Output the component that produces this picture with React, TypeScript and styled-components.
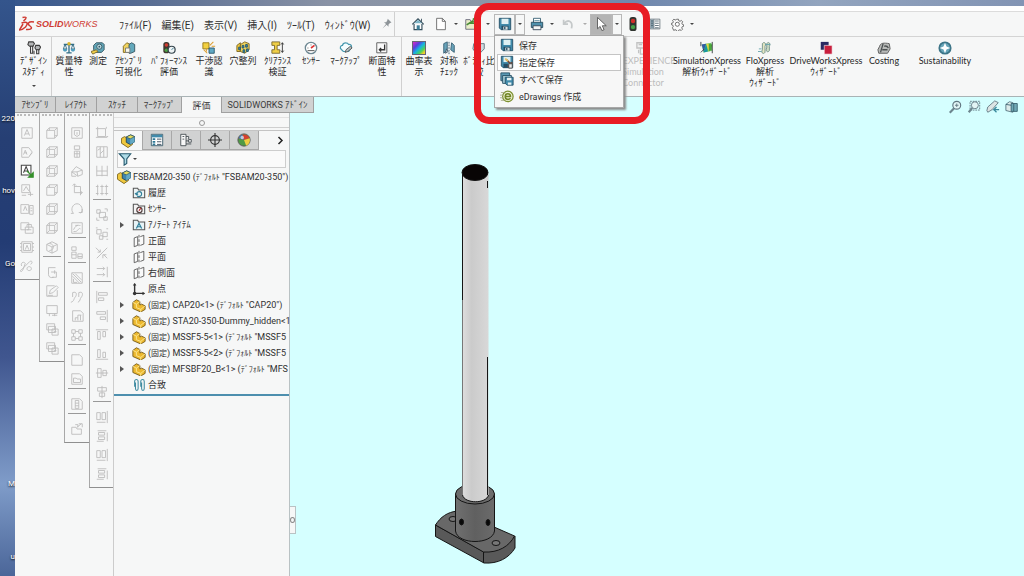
import React from "react";
import styled, { createGlobalStyle } from "styled-components";

const GlobalStyle = createGlobalStyle`
  * { box-sizing: border-box; }
  body { margin: 0; font-family: Roboto, "Noto Sans CJK JP", sans-serif; color: #303030; }
  button { font: inherit; color: inherit; background: none; border: 0; padding: 0; margin: 0; }
  svg { display: block; flex: none; }
  ul { list-style: none; margin: 0; padding: 0; }
`;

/* ---------- desktop and window frame ---------- */

const Desktop = styled.div`
  position: relative;
  display: grid;
  grid-template-columns: 15px minmax(0, 1fr);
  min-height: 100vh;
  padding-top: 6px;
  background: linear-gradient(90deg, #34558c 0, #5b6f94 15%, #8a93a6 32%, #8b98a8 50%, #6f87ad 62%, #93a5bf 80%, #8294b4 100%);
`;

const DesktopEdge = styled.div`
  display: grid;
  grid-template-rows: 119px 72px 73px 220px 73px 1fr;
  margin-top: -6px;
  padding-top: 6px;
  overflow: hidden;
  background: linear-gradient(180deg, #34558c 0, #263f74 24%, #233c74 42%, #40568f 62%, #7f9cc9 84%, #4b6699 100%);
`;

const DesktopLabel = styled.span`
  align-self: end;
  justify-self: end;
  line-height: 12px;
  font-size: 8px;
  white-space: nowrap;
  color: #fff;
  text-shadow: 0 1px 2px #000;
`;

const Window = styled.div`
  display: flex;
  flex-direction: column;
  min-width: 0;
  background: #f6f7f7;
`;

const TitleEdge = styled.div`
  height: 6px;
  background: #fff;
  border-bottom: 1px solid #dcdcdc;
`;

/* ---------- menu bar ---------- */

const MenuBar = styled.header`
  display: flex;
  align-items: stretch;
  height: 25px;
  border-bottom: 1px solid #d4d4d4;
  font-size: 10px;
`;

const Brand = styled.div`
  display: flex;
  align-items: center;
  gap: 1px;
  width: 97px;
  padding-left: 4px;
  font-family: "Liberation Sans", sans-serif;
  font-size: 9px;
  font-style: italic;
  color: #cf3b33;
`;

const Menus = styled.nav`
  display: flex;
  align-items: center;
  gap: 10px;
  padding-left: 7px;
  width: 283px;
  white-space: nowrap;
  border-right: 1px solid #d0d0d0;
`;

const QuickBar = styled.div`
  display: flex;
  align-items: center;
  padding-left: 12px;
`;

const QuickButton = styled.button<{ $w: number; $on?: boolean; $boxed?: boolean }>`
  display: flex;
  align-items: center;
  justify-content: center;
  width: ${(p) => p.$w}px;
  height: 21px;
  background: ${(p) => (p.$on ? "#b4b4b4" : "transparent")};
  border: ${(p) => (p.$boxed ? "1px solid #b8b8b8" : "0")};
`;

const Caret = styled.span<{ $pale?: boolean }>`
  border: 2px solid transparent;
  border-top-color: ${(p) => (p.$pale ? "#aaa" : "#444")};
  border-bottom: 0;
`;

const StudyCaret = styled(Caret)`
  margin-top: 8px;
`;

const SaveGroup = styled.div`
  position: relative;
  display: flex;
  z-index: 5;
`;

const SaveMenu = styled.ul`
  position: absolute;
  top: 21px;
  left: 0;
  width: 130px;
  padding: 1px 2px 2px;
  background: #f7f7f7;
  border: 1px solid #a8a8a8;
  box-shadow: 2px 2px 2px #8c8c8c;
`;

const SaveItem = styled.button<{ $hot?: boolean }>`
  display: flex;
  align-items: center;
  gap: 5px;
  width: 100%;
  height: 17px;
  padding-left: 2px;
  font-size: 9px;
  text-align: left;
  background: ${(p) => (p.$hot ? "#fff" : "transparent")};
  border: 1px solid ${(p) => (p.$hot ? "#c4c4c4" : "transparent")};
`;

const Highlight = styled.div`
  position: absolute;
  top: -11px;
  left: -20px;
  width: 176px;
  height: 121px;
  border: 7px solid #e81c24;
  border-radius: 15px;
  pointer-events: none;
`;

/* ---------- ribbon ---------- */

const Ribbon = styled.div`
  display: flex;
  height: 60px;
  border-bottom: 1px solid #a9b3b5;
`;

const RibbonGroup = styled.div<{ $line?: boolean }>`
  display: flex;
  padding: 4px 1px 0 2px;
  border-right: ${(p) => (p.$line ? "1px solid #d0d0d0" : "0")};
`;

const RibbonButton = styled.button<{ $w: number; $dim?: boolean }>`
  display: flex;
  flex-direction: column;
  align-items: center;
  width: ${(p) => p.$w}px;
  font-family: Lato, "Noto Sans CJK JP", sans-serif;
  font-size: 9px;
  line-height: 11px;
  white-space: pre;
  color: ${(p) => (p.$dim ? "#bdbdbd" : "#282828")};
  & > svg { opacity: ${(p) => (p.$dim ? 0.4 : 1)}; }
`;

const HiddenTools = styled.div`
  width: 119px;
`;

/* ---------- body ---------- */

const Body = styled.div`
  display: flex;
  flex: 1;
  min-height: 0;
`;

const LeftPane = styled.aside`
  position: relative;
  z-index: 1;
  display: flex;
  flex-direction: column;
  width: 275px;
  background: #f6f7f7;
  border-right: 1px solid #b9c2c4;
`;

const Tabs = styled.div`
  display: flex;
  height: 16px;
  width: max-content;
  font-size: 9px;
`;

const Tab = styled.button<{ $w: number; $active?: boolean }>`
  width: ${(p) => p.$w}px;
  color: #3c3c3c;
  white-space: nowrap;
  background: ${(p) => (p.$active ? "#f6f7f7" : "#d1d2d2")};
  border-right: 1px solid #a0a0a0;
  border-bottom: ${(p) => (p.$active ? "0" : "1px solid #a0a0a0")};
`;

const Workspace = styled.div`
  display: flex;
  flex: 1;
  align-items: flex-start;
`;

const ToolColumn = styled.div`
  display: flex;
  flex-direction: column;
  align-items: center;
  width: 25px;
  padding-bottom: 4px;
  border-right: 1px solid #a8a8a8;
  border-bottom: 1px solid #8f8f8f;
  margin-right: -1px;
  & + & { border-left: 1px solid #a8a8a8; width: 26px; }
  & + & + & + & { border-right: 0; width: 24px; }
`;

const Grip = styled.div`
  width: 20px;
  height: 9px;
  margin-top: 1px;
  border-top: 2px dotted #bbb;
`;

const ToolButton = styled.button`
  display: flex;
  align-items: center;
  justify-content: center;
  width: 20px;
  height: 19px;
`;

const ToolLine = styled.div`
  width: 18px;
  height: 6px;
  border-top: 1px solid #999;
`;

/* ---------- feature manager ---------- */

const Manager = styled.section`
  flex: 1;
  min-width: 0;
  align-self: stretch;
  margin-left: 1px;
  border-left: 1px solid #ccc;
`;

const Knob = styled.div`
  display: flex;
  justify-content: center;
  align-items: center;
  height: 11px;
  margin: 4px 0 2px;
  border-top: 1px solid #e2e2e2;
  border-bottom: 1px solid #cfcfcf;
  &::after { content: ""; width: 4px; height: 4px; border: 1px solid #999; border-radius: 50%; }
`;

const ManagerTabs = styled.div`
  display: flex;
  height: 20px;
  border-top: 1px solid #c4c4c4;
`;

const ManagerTab = styled.button<{ $active?: boolean }>`
  display: flex;
  align-items: center;
  justify-content: center;
  width: 29px;
  background: ${(p) => (p.$active ? "#f6f7f7" : "#d1d2d2")};
  border-right: 1px solid #a8a8a8;
  border-bottom: ${(p) => (p.$active ? "0" : "1px solid #a8a8a8")};
`;

const More = styled.button`
  flex: 1;
  display: flex;
  align-items: center;
  justify-content: flex-end;
  padding-right: 5px;
`;

const Filter = styled.label`
  display: flex;
  align-items: center;
  gap: 1px;
  height: 18px;
  margin: 0 3px;
  border: 1px solid #cdcdcd;
  background: #fafafa;
  input { flex: 1; min-width: 0; border: 0; outline: 0; background: none; font-size: 9px; }
`;

const Tree = styled.ul`
  border-bottom: 2px solid #4d8fae;
  padding: 1px 0;
`;

const TreeRow = styled.li<{ $root?: boolean }>`
  display: flex;
  align-items: center;
  gap: 2px;
  height: 16px;
  padding-left: ${(p) => (p.$root ? 3 : 5)}px;
  font-size: 9px;
  line-height: 16px;
  white-space: nowrap;
`;

const Small = styled.span`
  font-size: 8px;
`;

const Expander = styled.span<{ $shown?: boolean }>`
  flex: none;
  width: 11px;
  padding-left: 1px;
  &::before {
    content: "";
    display: block;
    width: 0;
    border: 3px solid transparent;
    border-left: 4px solid ${(p) => (p.$shown ? "#555" : "transparent")};
    border-right: 0;
  }
`;

/* ---------- graphics area ---------- */

const Viewport = styled.main`
  position: relative;
  flex: 1;
  min-width: 0;
  min-height: 479px;
  background: #d5ffff;
`;

const ViewTools = styled.div`
  display: flex;
  justify-content: flex-end;
  gap: 5px;
  padding: 3px 5px 0 0;
`;

const Model = styled.svg`
  position: absolute;
  left: 140px;
  top: 63px;
`;

const Splitter = styled.button`
  position: absolute;
  left: 0;
  top: 409px;
  display: flex;
  align-items: center;
  width: 6px;
  height: 28px;
  background: #f6f7f7;
  border: 1px solid #b9c2c4;
  border-left: 0;
  &::after { content: ""; width: 4px; height: 4px; border: 1px solid #888; border-radius: 50%; }
`;

/* ---------- icons ---------- */

type IconProps = { name: string; size?: number };

const shapes: Record<string, React.ReactNode> = {
  home: <><path d="M1.500 8.500 8 2l6.500 6.500M3.500 8v6.500h9V8" fill="#fff" stroke="#334d5b" strokeWidth="1.300" /><path d="M3.500 7 8 3l4.500 4" fill="#7fb5c7" /><path d="M6.500 14.500v-5h3.500v5z" fill="#3d7f99" /><path d="M12 2v3.500" stroke="#334d5b" /></>,
  page: <><path d="M3 1.500h6.500l3.500 3.500v9.500H3z" fill="#fff" stroke="#666" /><path d="M9.500 1.500v3.500H13" fill="none" stroke="#666" /></>,
  open: <><path d="M2 3h5l1 2h6v9H2z" fill="#e9edc9" stroke="#667" /><path d="M7 7h6M10 3l3-2 1 4M3 9l8-5" stroke="#498c37" strokeWidth="2" fill="none" /></>,
  save: <><path d="M1.500 1.500h13v13h-11l-2-2z" fill="#418bab" stroke="#244d63" /><path d="M4 2h8v6H4z" fill="#dff0f3" /><path d="M4 10h8v4.500H4z" fill="#254d64" /><path d="M6 11h5v3.500H6z" fill="#d6dedf" /><path d="M7 11.500h1.500V14H7z" fill="#254d64" /></>,
  saveAs: <><path d="M1.500 1.500h13v13h-11l-2-2z" fill="#418bab" stroke="#244d63" /><path d="M4 2h8v6H4z" fill="#dff0f3" /><path d="M4 10h5v4.500H4z" fill="#254d64" /><path d="m7 5 5 5M9 13.500l5-5" stroke="#754a3b" strokeWidth="2" /><path d="m6 4 3 3" stroke="#e9bd5d" strokeWidth="2" /><path d="M10 10h4v5h-4z" fill="#eee" stroke="#444" /></>,
  saveAll: <><path d="M1 1h10v9H1z" fill="#5b9ab5" stroke="#244d63" /><path d="M3 4h10v9H3z" fill="#a5cbd6" stroke="#244d63" /><path d="M6 6h9v9H8l-2-2z" fill="#418bab" stroke="#244d63" /><path d="M8 6.500h5v3H8zM9 12h4v2.500H9z" fill="#e7f1f2" /></>,
  edraw: <><circle cx="9" cy="8.500" r="6" fill="#eef2d2" stroke="#7b8f2e" strokeWidth="1.400" /><path d="M6 8.500h6c0-4-6-4-6 0s4 4 6 2" fill="none" stroke="#718526" strokeWidth="1.800" /><path d="M1 4h4M0 7h4M0 10h4M1 13h4" stroke="#a8ad8a" /></>,
  print: <><path d="M4 1.500h8V7H4z" fill="#fff" stroke="#345b70" /><path d="M1.500 6h13v6h-13z" fill="#4f91ad" stroke="#264b5e" /><path d="M3.500 10h9v4.500h-9z" fill="#f4f7f7" stroke="#345" /><path d="M5 4h6" stroke="#6797a9" /></>,
  undo: <path d="M3 3v5h5M3.500 7.500C8 2 14 5 12 13" fill="none" stroke="#c5c9ca" strokeWidth="2" />,
  cursor: <path d="M4 .5v13l3-2.700L9 15.500l2.500-1L9.500 10H14z" fill="#fff" stroke="#555" />,
  traffic: <><rect x="4" y="0" width="8" height="16" rx="3" fill="#303530" /><circle cx="8" cy="4.500" r="2.500" fill="#d22e29" /><circle cx="8" cy="11.500" r="2.500" fill="#45a247" /></>,
  list: <><path d="M1.500 1.500h13v13h-13z" fill="#fff" stroke="#56636b" /><path d="M2 2h4v12H2z" fill="#8099a6" /><path d="M8 4h5M8 7h5M8 10h5M8 13h5M6.500 2v12M3 4h2M3 7h2M3 10h2" stroke="#39505c" /></>,
  gear: <><path d="m6.800 1.500 2.400 0 .4 2 1.500.6 1.700-1.100 1.600 1.700-1.100 1.600.6 1.500 1.600.5v1.900l-1.700.5-.6 1.500 1 1.600-1.600 1.600-1.600-1-1.500.6-.5 1.500H7l-.5-1.600-1.500-.6-1.600 1.100L1.800 12l1-1.700-.6-1.500-1.500-.5V6.400l1.600-.3.6-1.500-1-1.600 1.700-1.500 1.500 1 1.400-.5z" fill="#fafafa" stroke="#555" /><circle cx="7.800" cy="7.700" r="2.500" fill="#fff" stroke="#555" /></>,
  pin: <path d="m9 1 5 5-2 .6-2 2v3L7.500 9 2 14l4.700-6L4 5.500h3L8.500 3z" fill="#8d9498" />,
  study: <><path d="M2 1h5l1.500 2L7 6H3L1 4z" fill="#b4b6b7" stroke="#3c3c3c" strokeWidth="1.200" /><path d="M4 6h2.500v8H4z" fill="#eee" stroke="#3c3c3c" strokeWidth="1.200" /><path d="M10 5h4l1.500 2L14 10h-3.500L9 8z" fill="#b4b6b7" stroke="#3c3c3c" strokeWidth="1.200" /><path d="M11 10h2.500v4.500H11zM8 11v4" fill="#eee" stroke="#3c3c3c" strokeWidth="1.200" /></>,
  scale: <><path d="M8 2v11M2 4h12M5 13.500h6" stroke="#316d86" strokeWidth="1.500" /><path d="m3.500 4-2 5h4zM12.500 4l-2 5h4z" fill="none" stroke="#316d86" /><path d="M1 9h5c0 4-5 4-5 0M10 9h5c0 4-5 4-5 0" fill="#4f9dbd" /><circle cx="8" cy="3" r="2" fill="#deb72e" /></>,
  measure: <><path d="M3 10V5l3-3h7l2 2v6l-3 3H5z" fill="#61a6b9" stroke="#34525e" /><circle cx="9.500" cy="6.500" r="3" fill="#b9dbe2" stroke="#34525e" /><circle cx="9.500" cy="6.500" r="1" fill="#34525e" /><path d="m0 12 6-2 2 2-6 3z" fill="#f0cf4a" stroke="#77652b" /></>,
  asm: <><path d="m.5 5 3.500-2 3 1.500V9l2 1.500 4-2V12l-5 3.500-7.500-5z" fill="#f0c83d" stroke="#796119" /><path d="m6 3.500 5-2.500 4.500 2v6l-5 3L6 9.500z" fill="#3f86ad" stroke="#22485c" /><path d="m6 3.500 4.500 2v6.500l5-3V3z" fill="#63a9c4" /><path d="m6 3.500 5-2.500 4.500 2-5 2.500z" fill="#e4dc5c" stroke="#22485c" strokeWidth=".7" /></>,
  boxes: <><path d="m1.500 6 4-4 4 2v9h-8z" fill="#f2d560" stroke="#796119" /><path d="m8 4 3-2 3.500 2v8L10 14H8z" fill="#63a9bc" stroke="#34525e" /><path d="M4 8h5v5H4z" fill="#f7f7e9" stroke="#777" /></>,
  pattern: <><path d="m1 5 4-3v10H1z" fill="#f0c83d" stroke="#796119" /><path d="m5 4 5-3 5 2v7l-5 4-5-2z" fill="#efd35b" stroke="#796119" /><path d="M7 5h2v3H7zM11 4h2v3h-2zM3 7h2v3H3zM8 10h2v3H8zM12 9h2v3h-2z" fill="#3f89a8" stroke="#24566c" /></>,
  perf: <><rect x="1.500" y="1" width="7" height="13" rx="3" fill="#403830" /><circle cx="5" cy="4.500" r="2" fill="#d13b30" /><circle cx="5" cy="10.500" r="2" fill="#4ba244" /><circle cx="11" cy="10" r="4" fill="#eff4f5" stroke="#34444c" strokeWidth="1.400" /><path d="m11 10 2-2" stroke="#1d6781" /></>,
  clash: <><path d="M1 2h7v7H1z" fill="#f2d040" stroke="#927616" /><path d="M8 8h6v6H8z" fill="#60a9c5" stroke="#28566c" /><path d="m9 5 4-4M11 6h4M2 10l4 4M5 9v3" stroke="#dd9e2e" strokeWidth="1.200" /></>,
  clear: <><path d="M1 1h9v4H7v5h3v4H1v-4h3V5H1z" fill="#f0cf46" stroke="#77652b" /><path d="M13 2v11M11.500 4 13 2l1.500 2M11.500 11l1.500 2 1.500-2" fill="none" stroke="#333" /></>,
  gauge: <><circle cx="8" cy="8" r="6.500" fill="#fff" stroke="#6d8792" strokeWidth="1.500" /><path d="m8 8 4-3" stroke="#d33" strokeWidth="1.800" /><path d="M4 8h1M8 4v1M4 11h8" stroke="#444" /></>,
  cloud: <><path d="M3 10C0 8 2 5 4 5c1-4 6-3 7-1 4-1 4 4 2 5l-2 3H5z" fill="#f6fdff" stroke="#4698ae" strokeWidth="1.400" /><path d="m7 13 1-3 5-4 2 2-5 4z" fill="#b6c0c2" stroke="#555" /></>,
  section: <><path d="M2 2h11.500v11.500H2z" fill="#fafafa" stroke="#555" /><path d="M11 4v6H5m2-2-2 2 2 2" fill="none" stroke="#333" strokeWidth="1.500" /></>,
  symmetry: <><path d="m2 3 4-2v9l-4 4zM11 2l3 3v8l-4-3z" fill="#69a4bb" stroke="#345b70" /><path d="M8 1v14" stroke="#345b70" strokeDasharray="2 1" /><path d="m5 9 2 3-3 2z" fill="#bdd7df" stroke="#456" /></>,
  compare: <path d="M2 3h5v7l3 3 4-4V3H9v5L4 13 1 9z" fill="#d0dade" stroke="#59717b" />,
  dx: <><path d="M1 2h9v6H1zM5 8h10v7H5z" fill="#eee" stroke="#777" strokeWidth="1.500" /><path d="M3 4h4M8 11h4M12 2v5M3 10v4" stroke="#777" strokeWidth="1.500" /></>,
  sim: <><path d="m2 4 11-2 1 9-10 2z" fill="#6fc96c" /><path d="m2 4 5-1-3 9z" fill="#3258a7" /><path d="m7 3 2 9-5 1z" fill="#1795a2" /><path d="m7 3 4 0-1 9z" fill="#e5d944" /><path d="m10 3 4 1-1 6-3 2z" fill="#4aa93c" /><path d="M1 1v5M1 13l4-4M14 1v13" stroke="#303638" /></>,
  flo: <><path d="M5 3c2-3 5 0 3 3v7c-2 3-5 0-3-3z" fill="#e4e7c3" stroke="#6f8e86" /><path d="M10 3c2-3 5 0 3 3v5c-2 3-5 0-3-3z" fill="#cddcc4" stroke="#6f8e86" /><path d="M0 12h4M1 9h3M8 4h6" stroke="#63a3ab" /></>,
  drive: <><path d="M2 1h9v9H2z" fill="#292962" /><path d="M6 5h9v10H6z" fill="#c81f3d" stroke="#f6f7f7" strokeWidth=".7" /></>,
  cost: <><path d="M3 6c1-4 5-4 11-3l1 6-3 5H2l-1-4z" fill="#b9bbb9" stroke="#555" /><path d="M8 6c3-1 4 0 5 2M6 10h6M7 3 4 13" fill="none" stroke="#4d5253" strokeWidth="1.500" /></>,
  sustain: <><circle cx="8" cy="8" r="6.500" fill="#67a5b8" stroke="#3c7487" strokeWidth="2" /><path d="m8 2 1.700 4.300L14 8l-4.300 1.700L8 14 6.300 9.700 2 8l4.300-1.700z" fill="#fff" /></>,
  part: <><path d="m1 5 4-3 4 2v4l2-1 4 2v4l-5 3-9-4z" fill="#edb92f" stroke="#735817" /><path d="m1 5 4 2 4-3M5 7v4l5 2 5-4M10 13v3" fill="none" stroke="#fbe896" /></>,
  props: <><path d="M1.500 1.500h13v13h-13z" fill="#fff" stroke="#355766" /><path d="M2 2h12v3H2z" fill="#418bab" /><path d="M3 7h3M3 10h3M3 13h3" stroke="#2e7896" strokeWidth="2" /><path d="M8 7h5M8 10h5M8 13h5" stroke="#345" /></>,
  config: <><path d="M2 1.500h6v13H2zM4 4h2M4 7h2M8 4h3v3M11 7.500h3v3h-3zM8 9h3M8 12.500h6" fill="#f8f8f8" stroke="#454d51" /></>,
  target: <><circle cx="8" cy="8" r="5" fill="none" stroke="#333" strokeWidth="1.300" /><path d="M8 0v16M0 8h16" stroke="#333" strokeWidth="1.300" /></>,
  ball: <><circle cx="8" cy="8" r="7" fill="#4f9a44" stroke="#555" /><path d="M8 8 1.500 6A7 7 0 0 1 14.500 6z" fill="#d5402f" /><path d="M1.500 6A7 7 0 0 1 6 1.500L8 8z" fill="#437dad" /><path d="M8 8 14.500 6c1 4-1 7-4 8.500z" fill="#efce43" /><circle cx="6" cy="5" r="2" fill="#eee" opacity=".7" /></>,
  funnel: <path d="M1.500 2h13L10 8v5l-3 2V8z" fill="#aedbe7" stroke="#285b70" strokeWidth="1.300" />,
  history: <><path d="M1.500 2.500h5l1 2h7v9h-13z" fill="#edf4f5" stroke="#555" strokeWidth="1.200" /><path d="M5 9c1-4 6-3 6 0s-4 4-5 2M3.500 8 5 10l2-1" fill="none" stroke="#2f7f99" strokeWidth="1.300" /></>,
  sensor: <><path d="M1.500 2.500h5l1 2h7v9h-13z" fill="#f3f3f3" stroke="#555" strokeWidth="1.200" /><circle cx="8.500" cy="9" r="3" fill="#fff" stroke="#503d3d" strokeWidth="1.300" /><path d="m8 10 2-3" stroke="#b33" strokeWidth="1.500" /></>,
  note: <><path d="M1.500 2.500h5l1 2h7v9h-13z" fill="#e7f3f6" stroke="#555" strokeWidth="1.200" /><path d="m5 12 3-6 3 6M6 10h4" fill="none" stroke="#2f7f99" strokeWidth="1.400" /></>,
  plane: <><path d="m2.500 4.500 4-1.500v10l-4 1.500zM9.500 3l4-1.500v10L9.500 13" fill="#fafafa" stroke="#555" /><path d="M8 1v14" stroke="#555" strokeDasharray="3 2" /></>,
  origin: <><path d="M3 2v11h11" fill="none" stroke="#333" strokeWidth="1.600" /><path d="m1 4 2-3 2 3M12 11l3 2-3 2" fill="#333" /><circle cx="3" cy="13" r="2" fill="#333" /></>,
  mates: <path d="M3 10V4c0-3 4-3 4 0v8c0 3-3 3-3 0V5M10 10V4c0-3 4-3 4 0v8c0 3-3 3-3 0V5" fill="none" stroke="#3e8ba1" strokeWidth="1.200" />,
  zoomFit: <><circle cx="10" cy="6" r="4.500" fill="#e2f5f5" stroke="#607680" strokeWidth="1.300" /><path d="M7 9.500 2 14.500" stroke="#6d858e" strokeWidth="2.500" /><path d="M8 6h4M10 4v4" stroke="#607680" /></>,
  zoomArea: <><path d="M3.500 1.500h11v10h-11z" fill="none" stroke="#607680" strokeDasharray="2 1" /><circle cx="9" cy="6" r="4" fill="#e2f5f5" stroke="#607680" /><path d="m6 9-4 5" stroke="#6d858e" strokeWidth="2.500" /></>,
  prev: <><path d="m1 12 1-4 8-7 4 2-7 8-5 3z" fill="#dbe4e4" stroke="#607680" /><path d="M15 11H9l3-3m-3 3 3 3" fill="none" stroke="#38899c" strokeWidth="1.500" /></>,
  sectionView: <><path d="m1 5 4-3 4 1v11l-8-2z" fill="#dcebea" stroke="#54717d" /><path d="M7 4h7v9H7z" fill="#6fa9b5" stroke="#38616e" /><path d="M10 4v9M1 5l6 1" stroke="#38616e" /></>,
};

const Icon = ({ name, size = 14 }: IconProps) => (
  <svg width={size} height={size} viewBox="0 0 16 16" aria-hidden="true">{shapes[name]}</svg>
);

/* Outline glyphs of the disabled side tools, all in one pale grey. */
const outlines: Record<string, string> = {
  textBox: "M2 2h12v12H2zM5 11l3-7 3 7M6 9h4",
  textTag: "M2 3h8l4 5-4 6H2zM4 11l2-5 2 5M5 9h3M11 12l3-3",
  textPlus: "M2 2h9v9H2zM4 9l3-5 3 5M9 13h6M12 10v5M2 14h5",
  textCopy: "M1 3h9v10H1zM4 10l2-5 2 5M11 4h4v10h-4zM12 7h2M12 10h2",
  textLock: "M1 2h9v8H1zM6 7h9v7H6zM8 7V4h5v3M8 10h5",
  textGrid: "M2 2h12v12H2zM4 4h8v8H4zM6 11l2-5 2 5M0 4h2M0 8h2M0 12h2M14 4h2M14 8h2M14 12h2",
  link: "M2 8c-2-3 2-6 4-3l-3 8c-2 3-4 0-1-1l9-9c3-2 4 2 1 3M8 11c0-3 5-3 5 0s-5 3-5 0",
  cube: "M2 5h9v9H2zM5 2h9v9h-3M2 5l3-3M11 5l3-3M11 14l3-3M5 2v3",
  cubeWire: "M2 5h9v9H2zM5 2h9v9H5zM2 5l3-3M11 5l3-3M11 14l3-3M2 14l3-3",
  cubeRound: "M2 5l6-3 6 3v7l-6 3-6-3zM2 5l6 3 6-3M8 8v7M5 4c6 0 6 8 0 8",
  arc: "M12 3H4v8c0 3 3 4 6 3M7 8h6v6H8M11 6v4",
  edit: "M14 7v7H2V2h9M5 11l1-4 7-5 2 2-6 6zM3 13h6",
  screen: "M2 3h12v9H2zM5 12v3M11 12v3M8 14h6",
  layers: "M2 2h9v7H2zM4 5h8v7H4zM8 8h7v7H8zM10 11h3",
  shield: "M2 2h12v12H2zM5 5h6v5l-3 2-3-2zM8 7v3",
  split: "M5 1h6v4H5zM5 7h6v7H5zM5 10h6M8 7v7",
  poly: "M2 9l5-6 7 4v5l-5 2zM2 9l6 0 1 5M8 9l6-2M2 9v5h5",
  flip: "M5 1v10h9M5 4h7v10M3 3l2-2 2 2M12 9l2 2-2 2",
  loop: "M4 13C0 9 3 2 8 2s8 7 4 11M10 12h4V8M4 13H1",
  swirl: "M2 2h12v12H2zM4 10c4-8 7-4 8-5M4 12c6 1 5-5 8-3M6 5h3",
  parts: "M2 1h5v4H2zM2 7h5v7H2zM9 9h5v5H9zM2 10h5M9 12h5",
  tri: "M2 2h12v12H2zM3 3l10 10M3 6l8 8M6 3l7 7M4 9v4h4",
  twin: "M3 3c5-2 5 3 3 5s-1 5-5 6M10 3c5-2 5 3 3 5s-1 5-4 6M3 3v5M10 3v5",
  sheet: "M3 2h9l3 3v9H3zM6 13v-3h3V7h4M9 10v3M12 7v6",
  link4: "M2 2h4v4H2zM10 2h4v4h-4zM2 10h4v4H2zM10 10h4v4h-4zM6 4h4M6 12h4M4 6v4M12 6v4",
  blank: "M2 2h9l3 3v9H2z",
  folderPage: "M2 2h9l3 3v9H2zM4 7h3l1 1h4v4H4z",
  zip: "M2 2h9l3 3v9H2zM6 4h4v9H6zM6 7h4M6 10h4",
  exportBox: "M2 6h5l1 2h5v6H2zM8 6l5-4M10 2h4v4M6 3h3v3",
  frame: "M3 3h9v9H3zM1 3h2M3 1v2M13 1v2M13 12h2M1 13h13",
  cols: "M2 2h12v12H2zM6 2v12M10 2v12M3 6l3-2M6 10l4-4",
  rows: "M2 2v12M8 2v12M14 2v12M2 8h12M2 13h12",
  bars: "M3 2v12M8 2v12M13 2v12M1 4h3M6 4h4M11 4h4M1 12h3M6 12h4M11 12h4",
  overlap: "M2 2h4v4H2zM10 10h4v4h-4zM5 5h7v6H5zM11 1h3v3M2 11v3h3",
  group: "M2 3h5v5H2zM9 6h5v5H9zM5 10h4v4H5zM1 1h2M13 2h2M13 14h2",
  converge: "M1 2l5 5M6 4v3H3M14 2l-12 12M14 14l-4-4M9 14v-4h4",
  arrows: "M2 4h9M9 2l2 2-2 2M2 11h9M9 9l2 2-2 2M14 2v12",
  alignL: "M2 1v14M4 3h10v3H4zM4 9h6v3H4z",
  alignR: "M14 1v14M2 3h10v3H2zM6 9h6v3H6z",
  alignT: "M1 2h14M3 4h3v9H3zM9 4h3v6H9z",
  alignB: "M1 14h14M3 3h3v9H3zM9 6h3v6H9z",
  centerV: "M1 8h14M3 3h4v10H3zM9 5h4v6H9z",
  centerH: "M8 1v14M3 3h10v4H3zM5 9h6v4H5z",
  gapH: "M2 3h4v8H2zM8 3h4v8H8zM14 1v14M2 14h10",
  gapV: "M3 2h10M4 4h7v3H4zM4 9h7v3H4zM14 4v10M2 14h8",
};

const columns: string[][] = [
  ["textBox", "textTag", "insertText", "textPlus", "textCopy", "textLock", "textGrid", "link"],
  ["cube", "cubeWire", "cubeWire", "cube", "cubeWire", "cubeWire", "cubeRound", "-", "arc", "edit", "screen", "layers", "layers"],
  ["shield", "split", "poly", "flip", "loop", "swirl", "-", "parts", "-", "tri", "twin", "sheet", "link4", "-", "blank", "folderPage", "-", "zip", "-", "exportBox"],
  ["frame", "cols", "rows", "bars", "-", "overlap", "group", "converge", "arrows", "-", "alignL", "alignR", "alignT", "alignB", "centerV", "centerH", "-", "gapH", "gapV", "gapH", "gapV"],
];

const SideTool = ({ name }: { name: string }) => (
  <ToolButton aria-label={name} disabled={name !== "insertText"}>
    <svg width="14" height="14" viewBox="0 0 16 16" aria-hidden="true" fill="none">
      {name === "insertText" ? (
        <>
          <path d="M1.500 1.500h11v11h-11zM4 10l3-7 3 7M5 8h4" fill="#fff" stroke="#444" strokeWidth="1.200" />
          <path d="m8 8 7 7M15 10v5h-5z" fill="#35902b" stroke="#35902b" strokeWidth="1.500" />
        </>
      ) : (
        <path d={outlines[name]} stroke="#bbb" />
      )}
    </svg>
  </ToolButton>
);

/* ---------- data ---------- */

const menus = ["ﾌｧｲﾙ(F)", "編集(E)", "表示(V)", "挿入(I)", "ﾂｰﾙ(T)", "ｳｨﾝﾄﾞｳ(W)"];

type Tool = [label: string, icon: string, width: number];

const evaluateTools: Tool[] = [
  ["質量特\n性", "scale", 30],
  ["測定", "measure", 28],
  ["ｱｾﾝﾌﾞﾘ\n可視化", "boxes", 33],
  ["ﾊﾟﾌｫｰﾏﾝｽ\n評価", "perf", 48],
  ["干渉認\n識", "clash", 32],
  ["穴整列", "pattern", 36],
  ["ｸﾘｱﾗﾝｽ\n検証", "clear", 33],
  ["ｾﾝｻｰ", "gauge", 34],
  ["ﾏｰｸｱｯﾌﾟ", "cloud", 36],
  ["断面特\n性", "section", 36],
];

const checkTools: Tool[] = [
  ["曲率表\n示", "curvature", 30],
  ["対称\nﾁｪｯｸ", "symmetry", 30],
  ["ﾎﾞﾃﾞｨ比\n較", "compare", 30],
];

const xpressTools: Tool[] = [
  ["SimulationXpress\n解析ｳｨｻﾞｰﾄﾞ", "sim", 68],
  ["FloXpress\n解析\nｳｨｻﾞｰﾄﾞ", "flo", 48],
  ["DriveWorksXpress\nｳｨｻﾞｰﾄﾞ", "drive", 74],
  ["Costing", "cost", 42],
  ["Sustainability", "sustain", 80],
];

const tabs: [string, number][] = [
  ["ｱｾﾝﾌﾞﾘ", 41], ["ﾚｲｱｳﾄ", 41], ["ｽｹｯﾁ", 41], ["ﾏｰｸｱｯﾌﾟ", 44], ["評価", 40], ["SOLIDWORKS ｱﾄﾞｲﾝ", 92],
];

const treeItems: { icon: string; text: string; open?: boolean }[] = [
  { icon: "history", text: "履歴" },
  { icon: "sensor", text: "ｾﾝｻｰ" },
  { icon: "note", text: "ｱﾉﾃｰﾄ ｱｲﾃﾑ", open: true },
  { icon: "plane", text: "正面" },
  { icon: "plane", text: "平面" },
  { icon: "plane", text: "右側面" },
  { icon: "origin", text: "原点" },
  { icon: "part", text: '(固定) CAP20<1> (ﾃﾞﾌｫﾙﾄ "CAP20")', open: true },
  { icon: "part", text: "(固定) STA20-350-Dummy_hidden<1", open: true },
  { icon: "part", text: '(固定) MSSF5-5<1> (ﾃﾞﾌｫﾙﾄ "MSSF5', open: true },
  { icon: "part", text: '(固定) MSSF5-5<2> (ﾃﾞﾌｫﾙﾄ "MSSF5', open: true },
  { icon: "part", text: '(固定) MFSBF20_B<1> (ﾃﾞﾌｫﾙﾄ "MFS', open: true },
  { icon: "mates", text: "合致" },
];

/* Component names mix scripts: their Japanese words are set one size smaller. */
const ComponentName = ({ text }: { text: string }) => (
  <span>
    {text.split(/(固定|ﾃﾞﾌｫﾙﾄ)/).map((part, i) => (i % 2 ? <Small key={i}>{part}</Small> : part))}
  </span>
);

const Curvature = styled.span`
  width: 14px;
  height: 14px;
  border: 1px solid #667;
  background: linear-gradient(135deg, #e227c3 0, #5540e0 30%, #16b5df 52%, #4cd45a 74%, #f0cf2c 90%);
`;

const RibbonTool = ({ tool, dim }: { tool: Tool; dim?: boolean }) => (
  <RibbonButton $w={tool[2]} $dim={dim}>
    {tool[1] === "curvature" ? <Curvature /> : <Icon name={tool[1]} />}
    {tool[0]}
  </RibbonButton>
);

const saveItems: [string, string][] = [
  ["保存", "save"], ["指定保存", "saveAs"], ["すべて保存", "saveAll"], ["eDrawings 作成", "edraw"],
];

/* ---------- 3D part ---------- */

const PostModel = () => (
  <Model width="90" height="410" viewBox="430 160 90 410" role="img" aria-label="FSBAM20-350">
    <defs>
      <linearGradient id="pipe"><stop offset="0" stopColor="#dedede" /><stop offset=".35" stopColor="#cbcbcb" /><stop offset="1" stopColor="#d8d8d8" /></linearGradient>
      <linearGradient id="socket"><stop offset="0" stopColor="#707070" /><stop offset=".5" stopColor="#606060" /><stop offset="1" stopColor="#6b6b6b" /></linearGradient>
    </defs>
    <g stroke="#151515" strokeWidth="1" strokeLinejoin="round">
      <path d="M435.500 525v11.500L484 563c14 1 25-5 31-15v-12l-31 16z" fill="#595959" />
      <path d="M435.500 525c5-8 12-13 22-14l57 25c-5 10-16 17-31 16z" fill="#686868" />
      <path d="M483.500 552v11" fill="none" />
      <ellipse cx="453" cy="519" rx="4" ry="2.500" fill="#777" />
      <ellipse cx="496" cy="543" rx="4" ry="2.500" fill="#777" />
      <path d="M455.500 494v37c2 14 37 14 39 0v-37z" fill="url(#socket)" />
      <ellipse cx="475" cy="494" rx="19.500" ry="10" fill="#6c6c6c" />
      <path d="M462.500 172v323c2 9 24 9 26 0V172z" fill="url(#pipe)" stroke="none" />
      <path d="M462.500 495c2 9 24 9 26 0" fill="none" />
      <path d="M462.500 174v126M487.500 181v7M487.500 357v138" fill="none" />
      <path d="M462.500 300v195" fill="none" stroke="#777" />
      <ellipse cx="475" cy="172.500" rx="13" ry="8" fill="#080505" />
      <ellipse cx="461.500" cy="522" rx="2" ry="3" fill="#080808" />
      <ellipse cx="488" cy="522.500" rx="2" ry="3" fill="#080808" />
    </g>
  </Model>
);

export default function App() {
  return (
    <>
      <GlobalStyle />
      <Desktop>
        <DesktopEdge>
          {["220", "hov", "Go", "M", "u"].map((t) => <DesktopLabel key={t}>{t}</DesktopLabel>)}
        </DesktopEdge>
        <Window>
          <TitleEdge />
          <MenuBar>
            <Brand>
              <svg width="16" height="17" viewBox="0 0 16 17" fill="none" stroke="#cf3b33" strokeWidth="1.500" aria-hidden="true">
                <path d="M3.500 1.500c4-1 5 0 1 3.500M2.500 7c6-2 7 0 4 4-2 2-4 3-6 3l3.500-6M15 6c-6-1-7 2-4 4s1 4-4 3.500" />
              </svg>
              <span><b>SOLID</b>WORKS</span>
            </Brand>
            <Menus>
              {menus.map((m) => <button key={m}>{m}</button>)}
              <button aria-label="ピン"><Icon name="pin" size={12} /></button>
            </Menus>
            <QuickBar>
              <QuickButton $w={22} aria-label="ホーム"><Icon name="home" /></QuickButton>
              <QuickButton $w={23} aria-label="新規"><Icon name="page" /></QuickButton>
              <QuickButton $w={8} aria-label="新規の種類"><Caret /></QuickButton>
              <QuickButton $w={22} aria-label="開く"><Icon name="open" /></QuickButton>
              <QuickButton $w={12} aria-label="最近のファイル"><Caret /></QuickButton>
              <SaveGroup>
                <QuickButton $w={21} $boxed aria-label="保存ボタン"><Icon name="save" /></QuickButton>
                <QuickButton $w={10} $boxed aria-label="保存メニュー"><Caret /></QuickButton>
                <SaveMenu>
                  {saveItems.map(([text, icon], i) => (
                    <li key={text}><SaveItem $hot={i === 1}><Icon name={icon} />{text}</SaveItem></li>
                  ))}
                </SaveMenu>
                <Highlight />
              </SaveGroup>
              <QuickButton $w={23} aria-label="印刷"><Icon name="print" /></QuickButton>
              <QuickButton $w={8} aria-label="印刷の種類"><Caret /></QuickButton>
              <QuickButton $w={24} aria-label="元に戻す"><Icon name="undo" /></QuickButton>
              <QuickButton $w={10} aria-label="元に戻す一覧"><Caret $pale /></QuickButton>
              <QuickButton $w={22} $on $boxed aria-label="選択"><Icon name="cursor" /></QuickButton>
              <QuickButton $w={10} $boxed aria-label="選択の種類"><Caret /></QuickButton>
              <QuickButton $w={21} aria-label="再構築"><Icon name="traffic" /></QuickButton>
              <QuickButton $w={24} aria-label="ファイル プロパティ"><Icon name="list" size={12} /></QuickButton>
              <QuickButton $w={20} aria-label="オプション"><Icon name="gear" size={13} /></QuickButton>
              <QuickButton $w={10} aria-label="オプション一覧"><Caret /></QuickButton>
            </QuickBar>
          </MenuBar>
          <Ribbon>
            <RibbonGroup $line>
              <RibbonButton $w={33}>
                <Icon name="study" />{"ﾃﾞｻﾞｲﾝ\nｽﾀﾃﾞｨ"}
                <StudyCaret />
              </RibbonButton>
            </RibbonGroup>
            <RibbonGroup $line>
              {evaluateTools.map((t) => <RibbonTool key={t[0]} tool={t} />)}
            </RibbonGroup>
            <RibbonGroup>
              {checkTools.map((t) => <RibbonTool key={t[0]} tool={t} />)}
              <HiddenTools />
              <RibbonTool tool={["3DEXPERIENCE\nSimulation\nConnector", "dx", 60]} dim />
              {xpressTools.map((t) => <RibbonTool key={t[0]} tool={t} />)}
            </RibbonGroup>
          </Ribbon>
          <Body>
            <LeftPane>
              <Tabs>
                {tabs.map(([t, w]) => <Tab key={t} $w={w} $active={t === "評価"}>{t}</Tab>)}
              </Tabs>
              <Workspace>
                {columns.map((col, c) => (
                  <ToolColumn key={c}>
                    <Grip />
                    {col.map((n, i) => (n === "-" ? <ToolLine key={i} /> : <SideTool key={i} name={n} />))}
                  </ToolColumn>
                ))}
                <Manager>
                  <Knob />
                  <ManagerTabs>
                    {["asm", "props", "config", "target", "ball"].map((n, i) => (
                      <ManagerTab key={n} $active={i === 0} aria-label={n}><Icon name={n} /></ManagerTab>
                    ))}
                    <More aria-label="さらに表示">
                      <svg width="7" height="9" viewBox="0 0 7 9" fill="none" stroke="#222" strokeWidth="1.500"><path d="m1.500 1 3.500 3.500L1.500 8" /></svg>
                    </More>
                  </ManagerTabs>
                  <Filter>
                    <Icon name="funnel" /><Caret /><input aria-label="フィルター" />
                  </Filter>
                  <Tree>
                    <TreeRow $root>
                      <Icon name="asm" />
                      <ComponentName text={'FSBAM20-350 (ﾃﾞﾌｫﾙﾄ "FSBAM20-350")'} />
                    </TreeRow>
                    {treeItems.map((r) => (
                      <TreeRow key={r.text}>
                        <Expander $shown={r.open} />
                        <Icon name={r.icon} />
                        <ComponentName text={r.text} />
                      </TreeRow>
                    ))}
                  </Tree>
                </Manager>
              </Workspace>
            </LeftPane>
            <Viewport>
              <ViewTools>
                {["zoomFit", "zoomArea", "prev", "sectionView"].map((n) => (
                  <button key={n} aria-label={n}><Icon name={n} /></button>
                ))}
              </ViewTools>
              <PostModel />
              <Splitter aria-label="パネルを折りたたむ" />
            </Viewport>
          </Body>
        </Window>
      </Desktop>
    </>
  );
}
